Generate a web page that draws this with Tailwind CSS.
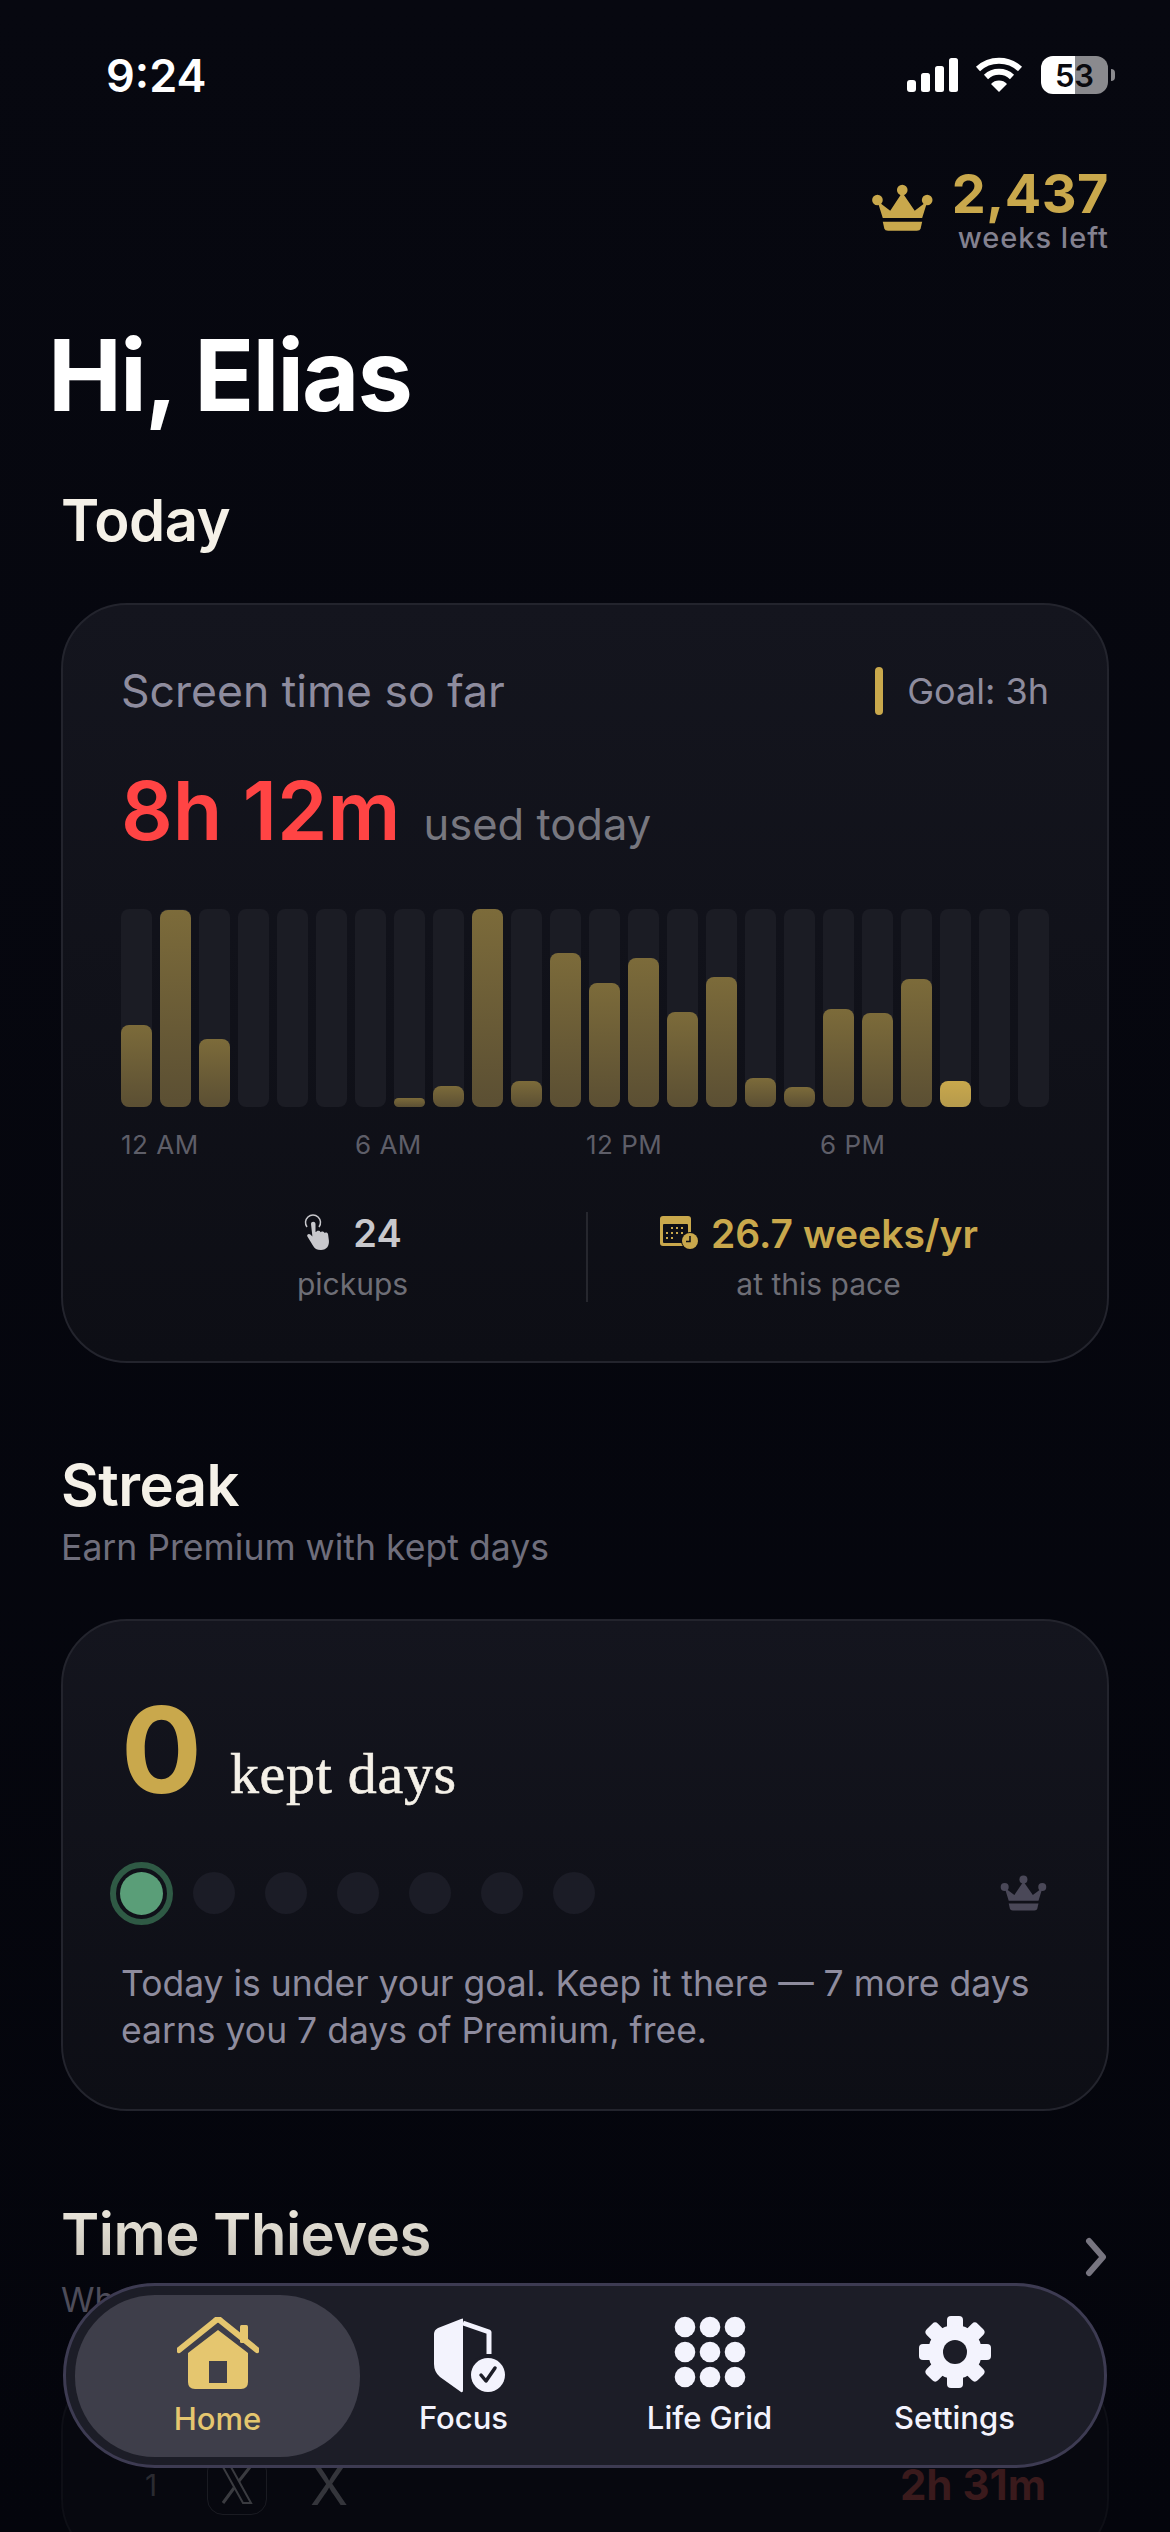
<!DOCTYPE html>
<html lang="en">
<head>
  <meta charset="UTF-8">
  <title>Home</title>
  <meta name="viewport" content="width=device-width, initial-scale=1.0">
  <script src="https://cdn.jsdelivr.net/npm/@tailwindcss/browser@4"></script>
</head>
<body class="bg-[#05060e]">
  <div class="relative w-[1170px] h-[2532px] overflow-hidden bg-gradient-to-b from-[#070810] to-[#04050c] font-['Inter',sans-serif] text-white">

    <!-- STATUS BAR -->
    <div class="h-[150px] flex items-center justify-between pl-[106px] pr-[55px]">
      <span class="text-[45px] font-semibold leading-none">9:24</span>
      <div class="flex items-center">
        <svg class="w-[51px] h-[34px]" viewBox="0 0 51 34" fill="#fff">
          <rect x="0" y="22" width="9" height="12" rx="3"/>
          <rect x="14" y="15" width="9" height="19" rx="2.5"/>
          <rect x="28" y="8" width="9" height="26" rx="2.5"/>
          <rect x="42" y="0" width="9" height="34" rx="2.5"/>
        </svg>
        <svg class="w-[48px] h-[36px] ml-[17px]" viewBox="0 0 48 36">
          <path d="M3 12A31 31 0 0 1 45 12" fill="none" stroke="#fff" stroke-width="6"/>
          <path d="M11 20A19 19 0 0 1 37 20" fill="none" stroke="#fff" stroke-width="6"/>
          <path d="M24 35L16 27A11 11 0 0 1 32 27Z" fill="#fff"/>
        </svg>
        <div class="ml-[18px] w-[67px] h-[38px] rounded-[12px] bg-[linear-gradient(90deg,#fff_51%,#8a8a8e_51%)] flex items-center justify-center text-[#0a0a0f] text-[31px] font-semibold leading-none">53</div>
        <div class="ml-[3px] w-[4px] h-[12px] rounded-r-full bg-[#8a8a8e]"></div>
      </div>
    </div>

    <!-- WEEKS LEFT -->
    <div class="mt-[15px] h-[90px] flex items-center justify-end pr-[61px]">
      <svg class="w-[66px] h-[49px] mt-[-4px]" viewBox="8 25 62 46" fill="#c9a84c">
        <circle cx="15" cy="40" r="5"/>
        <circle cx="38.3" cy="30.7" r="5"/>
        <circle cx="61.7" cy="40" r="5"/>
        <path d="M15 41L20 57H57L62 41L50 50L38.3 33L27 50Z"/>
        <path d="M20 60.500H57L55.500 67Q55 69 52 69H25Q22 69 21.500 67Z"/>
      </svg>
      <div class="ml-[16px] text-right">
        <div class="text-[54px] font-bold leading-[56px] tracking-[0.5px] text-[#c9a84c]">2,437</div>
        <div class="text-[29px] font-medium leading-[32px] tracking-[1px] text-[#83818f]">weeks left</div>
      </div>
    </div>

    <!-- GREETING -->
    <h1 class="mt-[65px] pl-[48px] text-[99px] font-bold leading-[110px] tracking-[-2px] text-white">Hi, Elias</h1>

    <main class="px-[61px]">
      <h2 class="mt-[58px] text-[58px] font-semibold leading-[64px] tracking-[-0.5px] text-[#f5f1e8]">Today</h2>

      <!-- SCREEN TIME CARD -->
      <section class="mt-[51px] h-[760px] rounded-[66px] border-2 border-[#23242d] bg-gradient-to-b from-[#14151e] to-[#0d0e15] px-[58px]">
        <div class="h-[136px] pt-[36px] flex items-center justify-between">
          <span class="text-[44.500px] leading-none text-[#8e8c9e]">Screen time so far</span>
          <div class="flex items-center">
            <div class="w-[8px] h-[48px] rounded-full bg-[#c9a84c]"></div>
            <span class="ml-[24px] text-[36px] leading-none text-[#8e8c9e]">Goal: 3h</span>
          </div>
        </div>
        <div class="mt-[20px] h-[100px] flex items-baseline">
          <span class="text-[81px] font-semibold leading-[100px] text-[#ff4444]">8h 12m</span>
          <span class="ml-[23px] text-[43.500px] leading-none text-[#77777f]">used today</span>
        </div>
        <div id="bars" class="mt-[48px] h-[198px] flex gap-[7.5px]">
          <!-- Barras são inseridas aqui -->
        </div>
        <div class="mt-[23px] flex text-[26px] leading-[30px] tracking-[0.5px] text-[#5e5e68]">
          <span class="w-[234px]">12 AM</span>
          <span class="w-[231px]">6 AM</span>
          <span class="w-[234px]">12 PM</span>
          <span>6 PM</span>
        </div>
        <div class="mt-[52px] flex">
          <div class="w-[463px] h-[90px] flex flex-col items-center">
            <div class="flex items-center h-[42px]">
              <svg class="w-[34px] h-[38px]" viewBox="0 0 34 38" fill="#c8c8cc">
                <path d="M4 13A7.500 7.500 0 1 1 16 13" fill="none" stroke="#c8c8cc" stroke-width="1.500"/>
                <path d="M8 10c0-3 4.500-3 4.500 0v8l1-.3c0-1 3.500-1.400 4 .5.600-1.200 3.800-1 4 .8.800-1 3.600-.6 3.600 1.500l.8 6c.5 5-2 9.500-8 9.500-4 0-6.500-1.500-8-4.500l-5.500-9c-1-2 1.500-3.500 3-2l2 2z"/>
              </svg>
              <span class="ml-[16px] text-[38px] font-semibold leading-none text-[#c8c8cc]">24</span>
            </div>
            <span class="mt-[12px] text-[30px] leading-[36px] text-[#6e6e76]">pickups</span>
          </div>
          <div class="ml-[2px] w-[2px] h-[90px] bg-[#26272e]"></div>
          <div class="flex-1 h-[90px] flex flex-col items-center">
            <div class="flex items-center h-[42px]">
              <svg class="w-[40px] h-[36px]" viewBox="0 0 40 36">
                <rect x="1" y="1" width="31" height="30" rx="3" fill="#c9a84c"/>
                <rect x="4" y="9" width="25" height="19" rx="1" fill="#0e0f16"/>
                <g fill="#c9a84c">
                  <rect x="12" y="12" width="2" height="2"/><rect x="17" y="12" width="2" height="2"/><rect x="22" y="12" width="2" height="2"/>
                  <rect x="7" y="17" width="2" height="2"/><rect x="12" y="17" width="2" height="2"/><rect x="17" y="17" width="2" height="2"/><rect x="22" y="17" width="2" height="2"/>
                  <rect x="7" y="22" width="2" height="2"/><rect x="12" y="22" width="2" height="2"/>
                </g>
                <circle cx="31" cy="26" r="9" fill="#0e0f16"/>
                <circle cx="31" cy="26" r="8" fill="#c9a84c"/>
                <path d="M31 21v5.500h-4" fill="none" stroke="#0e0f16" stroke-width="1.500"/>
              </svg>
              <span class="ml-[12px] text-[39px] font-semibold leading-none text-[#c9a84c]">26.7 weeks/yr</span>
            </div>
            <span class="mt-[12px] text-[30px] leading-[36px] text-[#6e6e76]">at this pace</span>
          </div>
        </div>
      </section>

      <!-- STREAK -->
      <h2 class="mt-[90px] text-[58px] font-semibold leading-[64px] tracking-[-0.5px] text-[#f5f1e8]">Streak</h2>
      <p class="mt-[10px] text-[35.600px] leading-[42px] text-[#6f6e7c]">Earn Premium with kept days</p>

      <section class="mt-[50px] h-[492px] rounded-[66px] border-2 border-[#23242d] bg-gradient-to-b from-[#14151e] to-[#0d0e15] px-[58px]">
        <div class="mt-[64px] h-[130px] flex items-baseline">
          <span class="text-[120px] font-bold leading-[130px] text-[#c9a84c]">0</span>
          <span class="ml-[28px] font-['Liberation_Serif',serif] text-[58px] leading-none tracking-[0.7px] [-webkit-text-stroke:0.6px_#f5f1e8] text-[#f5f1e8]">kept days</span>
        </div>
        <div class="mt-[46px] h-[64px] flex items-center">
          <div class="ml-[-11px] w-[63px] h-[63px] rounded-full border-[6px] border-[#2f5a45] p-[4px]">
            <div class="w-full h-full rounded-full bg-[#5a9e78]"></div>
          </div>
          <div class="ml-[20px] flex gap-[30px]">
            <div class="w-[42px] h-[42px] rounded-full bg-[#1b1c26]"></div>
            <div class="w-[42px] h-[42px] rounded-full bg-[#1b1c26]"></div>
            <div class="w-[42px] h-[42px] rounded-full bg-[#1b1c26]"></div>
            <div class="w-[42px] h-[42px] rounded-full bg-[#1b1c26]"></div>
            <div class="w-[42px] h-[42px] rounded-full bg-[#1b1c26]"></div>
            <div class="w-[42px] h-[42px] rounded-full bg-[#1b1c26]"></div>
          </div>
          <svg class="ml-auto w-[50px] h-[37px]" viewBox="8 25 62 46" fill="#4a4858">
            <circle cx="15" cy="40" r="5"/>
            <circle cx="38.3" cy="30.7" r="5"/>
            <circle cx="61.7" cy="40" r="5"/>
            <path d="M15 41L20 57H57L62 41L50 50L38.3 33L27 50Z"/>
            <path d="M20 60.500H57L55.500 67Q55 69 52 69H25Q22 69 21.500 67Z"/>
          </svg>
        </div>
        <p class="mt-[35px] text-[35.500px] leading-[47px] text-[#8e8c9e]">Today is under your goal. Keep it there — 7 more days earns you 7 days of Premium, free.</p>
      </section>

      <!-- TIME THIEVES -->
      <div class="mt-[90px] flex justify-between">
        <div>
          <h2 class="text-[58px] font-semibold leading-[66px] tracking-[-0.5px] bg-gradient-to-b from-[#efeadf] to-[#c6c2b8] bg-clip-text text-transparent">Time Thieves</h2>
          <p class="mt-[12px] text-[34px] leading-[42px] text-[#4d4c59]">What's stealing your time</p>
        </div>
        <svg class="mt-[36px] mr-[2px] w-[22px] h-[40px]" viewBox="0 0 22 40" fill="none" stroke="#777580" stroke-width="6" stroke-linecap="round" stroke-linejoin="round">
          <path d="M4 4L18 20L4 36"/>
        </svg>
      </div>
      <section class="mt-[44px] h-[200px] rounded-[66px] border-2 border-[#0e0f16] bg-[#07080f] px-[58px]">
        <div class="mt-[88px] flex items-center text-[#34353b]">
          <span class="ml-[24px] w-[62px] text-[30px] leading-none text-[#2a2b31]">1</span>
          <div class="w-[60px] h-[60px] rounded-[16px] border border-[#1a1b22] flex items-center justify-center">
            <svg class="w-[34px] h-[38px]" viewBox="0 0 34 38" fill="none" stroke="#3a3b40" stroke-width="2">
              <path d="M3 1H11L31 37H23Z"/>
              <path d="M30 1L19 15M14 22L3 37" stroke-width="3"/>
            </svg>
          </div>
          <span class="ml-[43px] text-[56px] leading-none">X</span>
          <span class="ml-auto mr-[3px] text-[42px] font-bold leading-none text-[#3a1a1c]">2h 31m</span>
        </div>
      </section>
    </main>

    <!-- NAV FLUTUANTE -->
    <nav class="absolute left-[63px] top-[2283px] w-[1044px] h-[185px] rounded-[92px] border-[3px] border-[#3d3b52] bg-[#1c1d27] flex items-center pl-[9px]">
      <div class="w-[285px] h-[162px] rounded-[80px] bg-[#3e3e4a] flex flex-col items-center">
        <svg class="mt-[22px] w-[82px] h-[72px]" viewBox="17 14 82 72">
          <path d="M19 47L55 18Q58 15 61 18L97 47" fill="none" stroke="#e5c66f" stroke-width="6" stroke-linecap="round"/>
          <rect x="80" y="22" width="8" height="18" rx="1.500" fill="#e5c66f"/>
          <path fill-rule="evenodd" d="M28 50L58 27L88 50V79Q88 86 81 86H35Q28 86 28 79ZM49 58V80H67V58Z" fill="#e5c66f"/>
        </svg>
        <span class="mt-[12px] text-[31px] font-medium leading-[36px] text-[#e5c66f]">Home</span>
      </div>
      <div class="w-[245px] flex flex-col items-center -ml-[19px]">
        <svg class="w-[80px] h-[80px] ml-[12px]" viewBox="0 0 80 80">
          <path d="M31 3L8 12Q4 14 4 18V48Q4 56 10 61L31 76Q33 77 33 74V3Q33 2 31 3Z" fill="#f3f3fd"/>
          <path d="M33 7L59 16V38" fill="none" stroke="#f3f3fd" stroke-width="5" stroke-linejoin="round"/>
          <circle cx="58" cy="59" r="20" fill="#1c1d27"/>
          <circle cx="58" cy="59" r="17" fill="#f3f3fd"/>
          <path d="M51 59L56 65L65 52" fill="none" stroke="#1c1d27" stroke-width="3.500" stroke-linecap="round" stroke-linejoin="round"/>
        </svg>
        <span class="mt-[4px] text-[31px] font-medium leading-[36px] text-[#f3f3fd]">Focus</span>
      </div>
      <div class="w-[245px] flex flex-col items-center ml-[1px]">
        <svg class="w-[72px] h-[72px] mb-[4px]" viewBox="0 0 72 72" fill="#f3f3fd">
          <circle cx="11" cy="11" r="10.300"/><circle cx="36" cy="11" r="10.300"/><circle cx="61" cy="11" r="10.300"/>
          <circle cx="11" cy="36" r="10.300"/><circle cx="36" cy="36" r="10.300"/><circle cx="61" cy="36" r="10.300"/>
          <circle cx="11" cy="61" r="10.300"/><circle cx="36" cy="61" r="10.300"/><circle cx="61" cy="61" r="10.300"/>
        </svg>
        <span class="mt-[8px] text-[31px] font-medium leading-[36px] text-[#f3f3fd]">Life Grid</span>
      </div>
      <div class="w-[245px] flex flex-col items-center">
        <svg class="w-[72px] h-[72px] mb-[4px]" viewBox="0 0 72 72" fill="#f3f3fd">
          <g transform="translate(36 36)">
            <rect x="-8" y="-36" width="16" height="72" rx="4"/>
            <rect x="-8" y="-36" width="16" height="72" rx="4" transform="rotate(45)"/>
            <rect x="-8" y="-36" width="16" height="72" rx="4" transform="rotate(90)"/>
            <rect x="-8" y="-36" width="16" height="72" rx="4" transform="rotate(135)"/>
            <circle r="27"/>
            <circle r="12" fill="#1c1d27"/>
          </g>
        </svg>
        <span class="mt-[8px] text-[31px] font-medium leading-[36px] text-[#f3f3fd]">Settings</span>
      </div>
    </nav>
  </div>

  <script>
    // altura de cada hora, 0 = sem uso
    const horas = [82, 197, 68, 0, 0, 0, 0, 9, 21, 198, 26, 154, 124, 149, 95, 130, 29, 20, 98, 94, 128, 26, 0, 0];
    const atual = 21;
    const container = document.getElementById('bars');
    horas.forEach((h, i) => {
      const cor = i === atual ? 'bg-gradient-to-b from-[#c9a84c] to-[#b59a4c]' : 'bg-gradient-to-b from-[#7c6b3a] to-[#5b4f33]';
      container.insertAdjacentHTML('beforeend', `
        <div class="flex-1 h-full rounded-[8px] bg-[#1b1c24] flex items-end">
          <div class="w-full rounded-[8px] ${cor}" style="height: ${h}px"></div>
        </div>
      `);
    });
  </script>
</body>
</html>
